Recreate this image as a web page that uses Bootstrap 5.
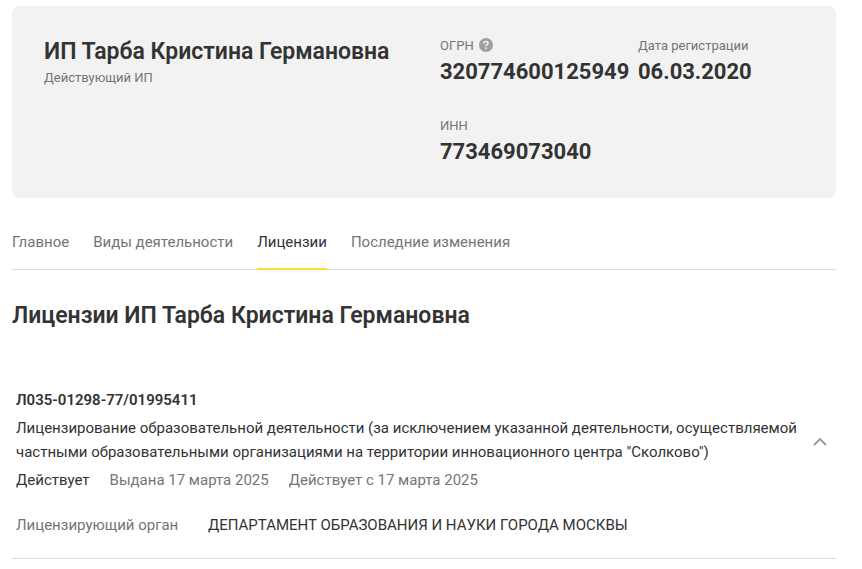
<!DOCTYPE html>
<html lang="ru">
<head>
<meta charset="utf-8">
<meta name="viewport" content="width=device-width, initial-scale=1">
<title>Лицензии ИП Тарба Кристина Германовна</title>
<link rel="stylesheet" href="https://cdn.jsdelivr.net/npm/bootstrap@5.3.0/dist/css/bootstrap.min.css">
<style>
body { font-family: Roboto, "Liberation Sans", sans-serif; font-size: 15px; line-height: 24px; color: #333; }
.page { padding: 6px 26px 0 12px; }
.summary { background: #f2f2f2; border-radius: 8px; padding: 32px 0 28px; }
.summary-name { padding: 0 32px; }
.summary-facts { padding-left: 16px; row-gap: 28px; }
.title { font-size: 23px; line-height: 28px; font-weight: 600; }
.note { font-size: 13px; line-height: 16px; color: #757575; }
.figure-value { font-size: 22px; line-height: 36px; font-weight: 700; }
.help-button { margin-left: 5px; }
.help { width: 14px; height: 14px; }
.tabs { column-gap: 24px; border-bottom: 1px solid #ddd; margin-top: 32px; }
.tabs .nav-link { padding: 0 0 14px; color: #757575; border-bottom: 2px solid transparent; margin-bottom: -1px; }
.tabs .nav-link.active { color: #333; border-bottom-color: #ffdd2d; }
.license { padding: 0 4px 21px; border-bottom: 1px solid #ddd; margin-top: 58px; }
.code { font-size: 15px; line-height: 24px; font-weight: 600; }
.soft { color: #757575; }
.statuses { column-gap: 20px; }
.organ { margin-top: 21px; }
.organ-label { width: 192px; }
.toggle { line-height: 0; width: 24px; }
</style>
</head>
<body>
<main class="page">
  <section class="summary row g-0">
    <div class="col-6 summary-name">
      <h1 class="title mb-1">ИП Тарба Кристина Германовна</h1>
      <div class="note">Действующий ИП</div>
    </div>
    <div class="col-6">
      <dl class="row g-0 mb-0 summary-facts">
        <div class="col-6">
          <dt class="note fw-normal d-flex">ОГРН
            <button type="button" class="btn p-0 border-0 lh-1 d-flex help-button" aria-label="Что такое ОГРН">
              <svg class="help" viewBox="0 0 14 14" aria-hidden="true"><circle cx="7" cy="7" r="7" fill="#9e9e9e"/><path d="M4.9 5.500C4.900 4.200 5.800 3.500 7 3.500s2.100.7 2.100 1.800C9.100 6.700 7 6.700 7 8.300" fill="none" stroke="#f2f2f2" stroke-width="1.600"/><rect x="6.200" y="9.400" width="1.700" height="1.700" fill="#f2f2f2"/></svg>
            </button>
          </dt>
          <dd class="figure-value mb-0">320774600125949</dd>
        </div>
        <div class="col-6">
          <dt class="note fw-normal">Дата регистрации</dt>
          <dd class="figure-value mb-0">06.03.2020</dd>
        </div>
        <div class="col-6">
          <dt class="note fw-normal">ИНН</dt>
          <dd class="figure-value mb-0">773469073040</dd>
        </div>
      </dl>
    </div>
  </section>

  <nav class="nav tabs" aria-label="Разделы">
    <a class="nav-link" href="#main">Главное</a>
    <a class="nav-link" href="#activities">Виды деятельности</a>
    <a class="nav-link active" aria-current="page" href="#licenses">Лицензии</a>
    <a class="nav-link" href="#changes">Последние изменения</a>
  </nav>

  <section id="licenses">
    <h2 class="title mb-0 mt-4 pt-2">Лицензии ИП Тарба Кристина Германовна</h2>
    <article class="license">
      <div class="d-flex align-items-center justify-content-between">
        <div>
          <h3 class="code mb-1">Л035-01298-77/01995411</h3>
          <p class="mb-1">Лицензирование образовательной деятельности (за исключением указанной деятельности, осуществляемой частными образовательными организациями на территории инновационного центра "Сколково")</p>
          <div class="d-flex flex-wrap statuses">
            <span>Действует</span>
            <span class="soft">Выдана 17 марта 2025</span>
            <span class="soft">Действует с 17 марта 2025</span>
          </div>
        </div>
        <button type="button" class="btn p-0 border-0 toggle flex-shrink-0" aria-label="Свернуть" aria-expanded="true">
          <svg width="14" height="12" viewBox="0 0 14 12" fill="none" stroke="#999" stroke-width="1.800" aria-hidden="true"><path d="M1 11 7 5l6 6"/></svg>
        </button>
      </div>
      <dl class="d-flex mb-0 organ">
        <dt class="fw-normal soft organ-label flex-shrink-0">Лицензирующий орган</dt>
        <dd class="mb-0">ДЕПАРТАМЕНТ ОБРАЗОВАНИЯ И НАУКИ ГОРОДА МОСКВЫ</dd>
      </dl>
    </article>
  </section>
</main>
<script src="https://cdn.jsdelivr.net/npm/bootstrap@5.3.0/dist/js/bootstrap.bundle.min.js"></script>
</body>
</html>
